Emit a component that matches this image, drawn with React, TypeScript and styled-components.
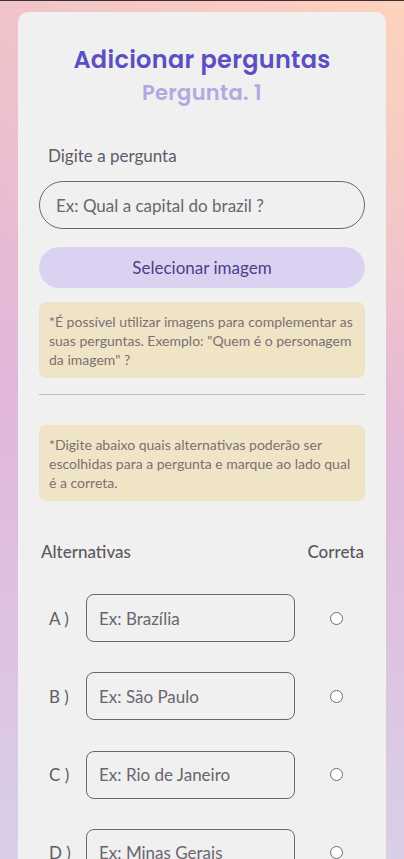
import React from "react";
import styled, { createGlobalStyle } from "styled-components";

const Global = createGlobalStyle`
  html, body { margin: 0; padding: 0; }
  body {
    font-family: Lato, "Open Sans", sans-serif;
    min-height: 100vh;
    background:
      radial-gradient(circle at 100% 0%, #fdd2bd 0%, rgba(253,210,189,0) 50%),
      linear-gradient(180deg, #efc1cc 0%, #e2b6d9 45%, #d9cfe7 100%);
    background-attachment: fixed;
  }
`;

const Page = styled.div`
  border-top: 1px solid #3a2f33;
  padding: 11px 18px 0;
`;

const Card = styled.main`
  background: #f0f0f0;
  border-radius: 10px;
  padding: 32px 21px 40px;
  display: flex;
  flex-direction: column;
`;

const Title = styled.h1`
  margin: 0;
  text-align: center;
  font-family: Poppins, Inter, sans-serif;
  font-weight: 600;
  font-size: 24px;
  line-height: 32px;
  color: #5b4fc4;
  letter-spacing: 0.3px;
`;

const Subtitle = styled.h2`
  margin: 3px 0 0;
  text-align: center;
  font-family: Poppins, Inter, sans-serif;
  font-weight: 600;
  font-size: 21px;
  line-height: 28px;
  letter-spacing: 0.3px;
  color: #b2a9df;
`;

const Label = styled.label`
  margin: 39px 0 0 9px;
  font-size: 17px;
  line-height: 20px;
  color: #5f5a64;
`;

const QuestionInput = styled.input`
  margin-top: 15px;
  height: 48px;
  box-sizing: border-box;
  border: 1px solid #6b6670;
  border-radius: 24px;
  background: transparent;
  padding: 0 16px;
  font-family: inherit;
  font-size: 17px;
  color: #5f5a64;
  &::placeholder { color: #6a656e; }
`;

const ImageButton = styled.button`
  margin-top: 18px;
  height: 41px;
  border: none;
  border-radius: 21px;
  background: #dbd2f2;
  color: #4a3f87;
  font-family: inherit;
  font-size: 17px;
`;

const Note = styled.p<{ $top: number }>`
  margin: ${(p) => p.$top}px 0 0;
  background: #f0e4c6;
  border-radius: 7px;
  padding: 10px 10px 9px;
  font-size: 14px;
  line-height: 19px;
  color: #7b7072;
`;

const Divider = styled.hr`
  margin: 16px 0 0;
  border: none;
  border-top: 1px solid #bdb9c3;
`;

const Header = styled.div`
  margin-top: 41px;
  display: flex;
  justify-content: space-between;
  padding: 0 1px 0 2px;
  font-size: 17px;
  font-weight: 500;
  line-height: 20px;
  color: #5c5760;
`;

const AltList = styled.div`
  margin-top: 32px;
  display: flex;
  flex-direction: column;
  gap: 30.3px;
`;

const AltRow = styled.div`
  display: grid;
  grid-template-columns: 47px 209px 1fr;
  align-items: center;
`;

const Letter = styled.span`
  padding-left: 10px;
  font-size: 17px;
  color: #5f5a64;
`;

const AltInput = styled.input`
  height: 48px;
  box-sizing: border-box;
  border: 1px solid #6b6670;
  border-radius: 8px;
  background: transparent;
  padding: 0 12px;
  font-family: inherit;
  font-size: 17px;
  &::placeholder { color: #6a656e; }
`;

const Radio = styled.input`
  justify-self: center;
  margin: 0 0 0 12px;
  width: 13px;
  height: 13px;
  appearance: none;
  border: 1px solid #6f6a72;
  border-radius: 50%;
  background: #fff;
`;

const alts = [
  { l: "A )", p: "Ex: Brazília" },
  { l: "B )", p: "Ex: São Paulo" },
  { l: "C )", p: "Ex: Rio de Janeiro" },
  { l: "D )", p: "Ex: Minas Gerais" },
];

export default function App() {
  return (
    <Page>
      <Global />
      <Card>
        <Title>Adicionar perguntas</Title>
        <Subtitle>Pergunta. 1</Subtitle>
        <Label>Digite a pergunta</Label>
        <QuestionInput placeholder="Ex: Qual a capital do brazil ?" />
        <ImageButton>Selecionar imagem</ImageButton>
        <Note $top={14}>
          *É possível utilizar imagens para complementar as suas perguntas. Exemplo: "Quem é o personagem da imagem" ?
        </Note>
        <Divider />
        <Note $top={30}>
          *Digite abaixo quais alternativas poderão ser escolhidas para a pergunta e marque ao lado qual é a correta.
        </Note>
        <Header>
          <span>Alternativas</span>
          <span>Correta</span>
        </Header>
        <AltList>
          {alts.map((a) => (
            <AltRow key={a.l}>
              <Letter>{a.l}</Letter>
              <AltInput placeholder={a.p} />
              <Radio type="radio" name="correta" />
            </AltRow>
          ))}
        </AltList>
      </Card>
    </Page>
  );
}
